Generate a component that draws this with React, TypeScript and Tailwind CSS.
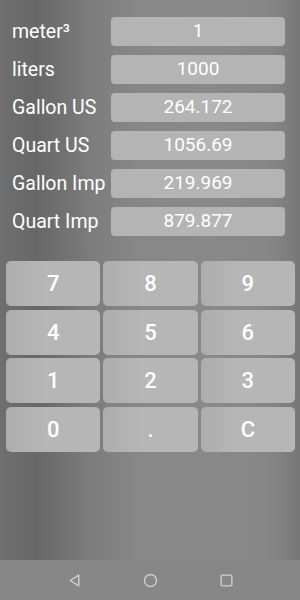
const units = [
  { label: "meter³", value: "1" },
  { label: "liters", value: "1000" },
  { label: "Gallon US", value: "264.172" },
  { label: "Quart US", value: "1056.69" },
  { label: "Gallon Imp", value: "219.969" },
  { label: "Quart Imp", value: "879.877" },
];

const keys = ["7", "8", "9", "4", "5", "6", "1", "2", "3", "0", ".", "C"];

export default function App() {
  return (
    <div
      className="w-[300px] h-[600px] flex flex-col overflow-hidden"
      style={{ fontFamily: "Roboto, 'Noto Sans', sans-serif" }}
    >
      <div className="flex-1 bg-[linear-gradient(90deg,#6f6f6f_0%,#676767_12%,#7c7c7c_30%,#878787_45%,#898989_70%,#868686_90%,#777777_100%)]">
        {/* Unit fields */}
        <div className="flex flex-col gap-[9px] pt-[17px] pl-[12px] pr-[15px]">
          {units.map((u) => (
            <div key={u.label} className="flex items-center h-[29px]">
              <span className="w-[99px] text-white text-[19.5px] leading-none whitespace-nowrap">
                {u.label}
              </span>
              <div className="flex-1 h-[29px] rounded-[4px] bg-[#b4b4b4] flex items-center justify-center text-white text-[19px]">
                {u.value}
              </div>
            </div>
          ))}
        </div>

        {/* Keypad */}
        <div className="grid grid-cols-3 gap-x-[3px] gap-y-[3.5px] mt-[25px] px-[6px] pr-[5px]">
          {keys.map((k) => (
            <div
              key={k}
              className="h-[45px] rounded-[5px] bg-[linear-gradient(90deg,#adadad,#b6b6b6_40%,#b6b6b6)] flex items-center justify-center text-white text-[22px] font-medium"
            >
              {k}
            </div>
          ))}
        </div>
      </div>

      {/* Navigation bar */}
      <div className="h-[40px] bg-[#878787] flex items-center justify-center gap-[61px]">
        <svg width="15" height="15" viewBox="0 0 14 14">
          <path d="M11 2 L3 7 L11 12 Z" fill="none" stroke="#cfcfcf" strokeWidth="1.3" strokeLinejoin="round" />
        </svg>
        <svg width="15" height="15" viewBox="0 0 14 14">
          <circle cx="7" cy="7" r="5.6" fill="none" stroke="#cfcfcf" strokeWidth="1.3" />
        </svg>
        <svg width="15" height="15" viewBox="0 0 14 14">
          <rect x="2" y="2" width="10" height="10" rx="1" fill="none" stroke="#cfcfcf" strokeWidth="1.3" />
        </svg>
      </div>
    </div>
  );
}
